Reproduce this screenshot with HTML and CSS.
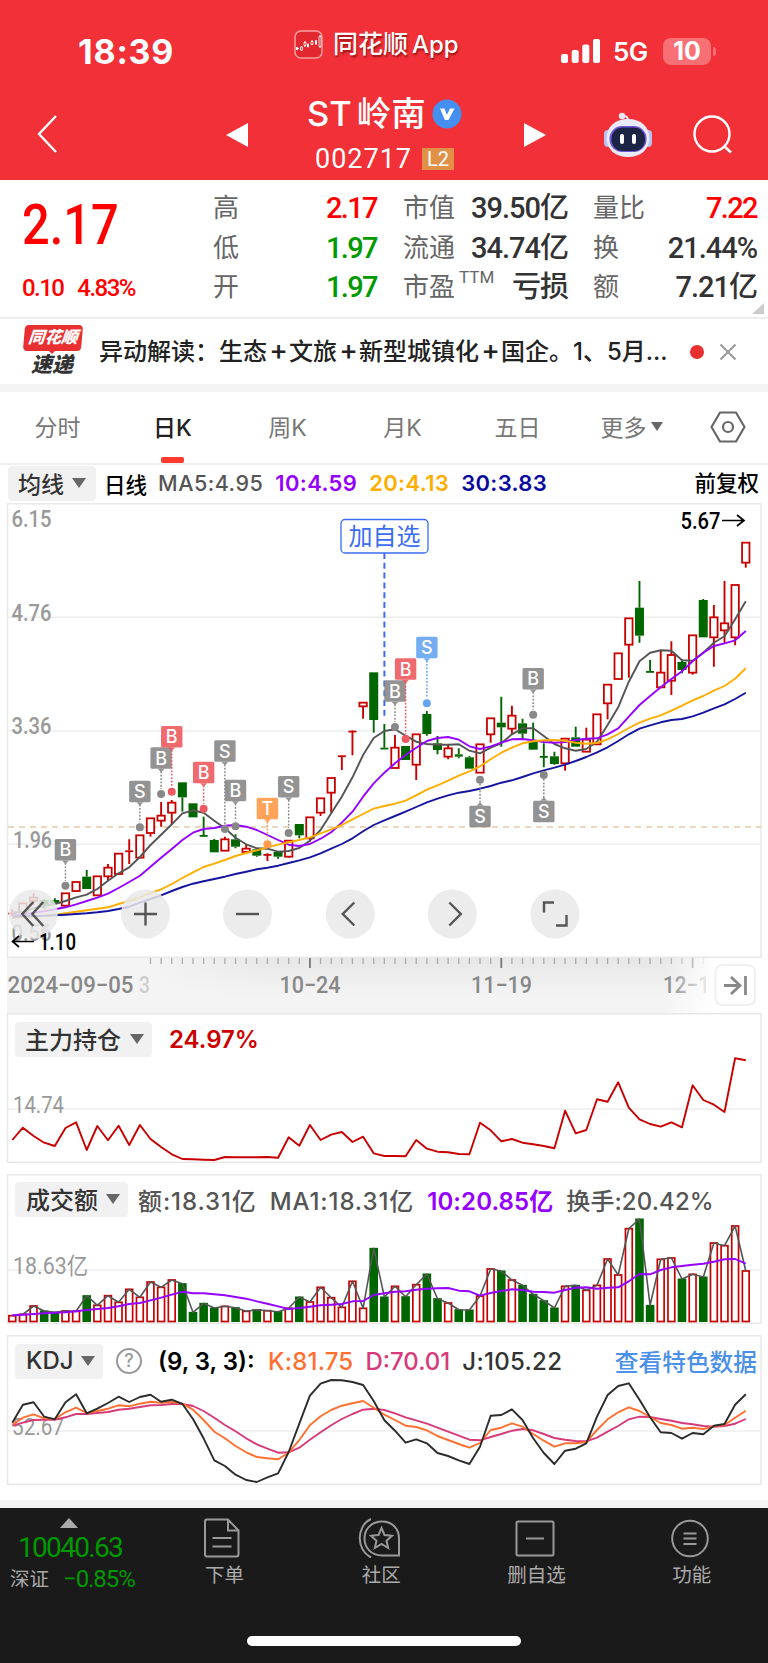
FILE: index.html
```html
<!DOCTYPE html>
<html lang="zh-CN">
<head>
    <meta charset="UTF-8">
    <meta name="viewport" content="width=device-width, initial-scale=1.0">
    <title>ST岭南 002717</title>
    <link rel="stylesheet" href="styles.css">
</head>
<body>
    <header>
        <div class="status-bar">
            <div class="time">18:39</div>
            <div class="app-name">
                <svg width="29" height="29" viewBox="0 0 29 29">
                    <rect x="1" y="1" width="27" height="27" rx="6" fill="#e2282e" stroke="#f9a0a0" stroke-width="1.5"/>
                    <path d="M3 18.500h2M7.500 16v5M11 11v6M14 13.500v4M18 10v5M22 10v4M26 5v13" stroke="#fff" stroke-width="1"/>
                    <path d="M2 17h2v3H2zM13 14h2v3h-2zM21 10.500h2v4h-2z" fill="#fff"/>
                    <path d="M6.500 17h2v3h-2zM10 12.500h2v3h-2zM17 11.500h2v3h-2zM25 6.500h2v10h-2z" fill="#e2282e" stroke="#fff" stroke-width=".8"/>
                </svg>
                <span>同花顺<b>App</b></span>
            </div>
            <div class="phone-state">
                <svg width="39" height="25" viewBox="0 0 39 25" fill="#fff">
                    <rect x="0" y="15" width="7" height="9" rx="2"/>
                    <rect x="10.700" y="11" width="7" height="13" rx="2"/>
                    <rect x="21.300" y="5.500" width="7" height="18.500" rx="2"/>
                    <rect x="32" y="0" width="7" height="24" rx="2"/>
                </svg>
                <span class="net">5G</span>
                <span class="battery">10</span>
                <i class="battery-tip"></i>
            </div>
        </div>
        <nav class="stock-nav">
            <svg class="back" width="22" height="40" viewBox="0 0 22 40"><path d="M20 2L3 20l17 18" fill="none" stroke="#fff" stroke-width="2.400"/></svg>
            <svg class="prev" width="24" height="26" viewBox="0 0 24 26"><path d="M23 1v24L1 13z" fill="#fff"/></svg>
            <div class="stock">
                <h1><span>ST</span>岭南
                    <svg width="30" height="30" viewBox="0 0 30 30"><circle cx="15" cy="15" r="14.500" fill="#448ff0"/><path d="M8 9.500h4.500l2.300 6.500 3.200-6.500h4.500L16.500 21h-3.600z" fill="#fff"/></svg>
                </h1>
                <p><span>002717</span><em>L2</em></p>
            </div>
            <svg class="next" width="24" height="26" viewBox="0 0 24 26"><path d="M1 1v24l22-12z" fill="#fff"/></svg>
            <svg class="robot" width="48" height="46" viewBox="0 0 48 46">
                <path d="M24 9c0-4-1-5-6-5" fill="none" stroke="#e6e8fa" stroke-width="2"/>
                <circle cx="18" cy="4" r="3.200" fill="#e6e8fa"/>
                <rect x="0" y="18" width="8" height="17" rx="4" fill="#b9c0ee"/>
                <rect x="40" y="18" width="8" height="17" rx="4" fill="#b9c0ee"/>
                <path d="M24 7C11 7 2.500 15 2.500 26S11 45 24 45s21.500-8 21.500-19S37 7 24 7z" fill="#e9ebfb"/>
                <rect x="5.500" y="14" width="37" height="26" rx="12.500" fill="#7158d8"/>
                <rect x="7.500" y="15.500" width="33.500" height="23.500" rx="11" fill="#1b2444"/>
                <rect x="16" y="22" width="4" height="10" rx="2" fill="#fff"/>
                <rect x="28" y="22" width="4" height="10" rx="2" fill="#fff"/>
            </svg>
            <svg class="search" width="42" height="42" viewBox="0 0 42 42"><circle cx="20" cy="20" r="17.500" fill="none" stroke="#fff" stroke-width="2.400"/><path d="M32 32l7 6.500" stroke="#fff" stroke-width="2.600"/></svg>
        </nav>
    </header>

    <section class="quote">
        <div class="price">
            <strong>2.17</strong>
            <p><span>0.10</span><span>4.83%</span></p>
        </div>
        <dl class="col high-low">
            <div><dt>高</dt><dd class="red">2.17</dd></div>
            <div><dt>低</dt><dd class="green">1.97</dd></div>
            <div><dt>开</dt><dd class="green">1.97</dd></div>
        </dl>
        <dl class="col value">
            <div><dt>市值</dt><dd>39.50亿</dd></div>
            <div><dt>流通</dt><dd>34.74亿</dd></div>
            <div><dt>市盈<sup>TTM</sup></dt><dd>亏损</dd></div>
        </dl>
        <dl class="col volume">
            <div><dt>量比</dt><dd class="red">7.22</dd></div>
            <div><dt>换</dt><dd>21.44%</dd></div>
            <div><dt>额</dt><dd>7.21亿</dd></div>
        </dl>
        <i class="corner"></i>
    </section>

    <section class="news">
        <div class="news-logo">
            <span>同花顺</span>
            <b>速递</b>
        </div>
        <p>异动解读：生态<i>+</i>文旅<i>+</i>新型城镇化<i>+</i>国企。1、5月...</p>
        <span class="dot"></span>
        <svg width="18" height="18" viewBox="0 0 18 18"><path d="M1.500 1.500l15 15M16.500 1.500l-15 15" stroke="#999" stroke-width="2"/></svg>
    </section>

    <ul class="tabs">
        <li>分时</li>
        <li class="active">日K</li>
        <li>周K</li>
        <li>月K</li>
        <li>五日</li>
        <li>更多<i class="caret"></i></li>
        <li class="setting"><svg width="36" height="32" viewBox="0 0 36 32" fill="none" stroke="#666" stroke-width="2.200"><path d="M10 1.500h16L34.500 16 26 30.500H10L1.500 16z" stroke-linejoin="round"/><circle cx="18" cy="16" r="5"/></svg></li>
    </ul>

    <div class="legend ma">
        <span class="pill">均线<i class="caret"></i></span>
        <b>日线</b>
        <span class="gray">MA5:4.95</span>
        <span class="purple">10:4.59</span>
        <span class="orange">20:4.13</span>
        <span class="navy">30:3.83</span>
        <b class="right">前复权</b>
    </div>
    <svg id="kline" class="kline" width="768" height="455" viewBox="0 3 768 455"></svg>
    <svg id="timeline" class="timeline" width="768" height="55" viewBox="0 0 768 55"></svg>

    <section class="panel">
        <svg id="holding" width="768" height="150" viewBox="0 3 768 150"></svg>
        <div class="legend">
            <span class="pill">主力持仓<i class="caret"></i></span>
            <span class="holding-value">24.97%</span>
        </div>
    </section>
    <section class="panel">
        <svg id="turnover" width="768" height="150" viewBox="0 2 768 150"></svg>
        <div class="legend turnover-legend">
            <span class="pill">成交额<i class="caret"></i></span>
            <span class="gray">额:18.31亿</span>
            <span class="gray">MA1:18.31亿</span>
            <span class="purple">10:20.85亿</span>
            <span class="gray rate">换手:20.42%</span>
        </div>
    </section>
    <section class="panel">
        <svg id="kdj" width="768" height="150" viewBox="0 5 768 150"></svg>
        <div class="legend kdj-legend">
            <span class="pill">KDJ<i class="caret"></i></span>
            <span class="help">?</span>
            <span class="black">(9, 3, 3):</span>
            <span class="k">K:81.75</span>
            <span class="d">D:70.01</span>
            <span class="j">J:105.22</span>
            <a class="right">查看特色数据</a>
        </div>
    </section>

    <footer>
        <div class="index">
            <i class="up"></i>
            <strong>10040.63</strong>
            <p>深证 <span>−0.85%</span></p>
        </div>
        <div class="item">
            <svg width="38" height="40" viewBox="0 0 38 40"><path d="M2 3.500Q2 1.500 4 1.500h21l10.500 11V36q0 2.500-2 2.500H4q-2 0-2-2zM25 1.500v11h10.500M9.500 20h19M9.500 28.500h19"/></svg>
            下单
        </div>
        <div class="item">
            <svg width="44" height="40" viewBox="0 0 44 40"><path d="M42 37.500H25C14 37.500 7.500 29.500 7.500 20.500S14 3.500 25 3.500s17 8 17 17zM14 1C-1 8-1 32 14 39.500"/><path d="M24.500 10l3 7 7.500.700-5.500 5.100 1.700 7.200-6.700-4-6.700 4 1.700-7.200-5.500-5.100 7.500-.700z"/></svg>
            社区
        </div>
        <div class="item">
            <svg width="40" height="40" viewBox="0 0 40 40"><rect x="1.500" y="3.500" width="37" height="34" rx="1.500"/><path d="M11 20.500h18"/></svg>
            删自选
        </div>
        <div class="item">
            <svg width="40" height="40" viewBox="0 0 40 40"><circle cx="20" cy="20.500" r="17.800"/><path d="M13.500 15.500h13M13.500 20.500h13M13.500 26h13"/></svg>
            功能
        </div>
        <div class="home-bar"></div>
    </footer>

    <script src="chart.js"></script>
</body>
</html>
```
FILE: styles.css
```css
* {
    box-sizing: border-box;
}

body {
    margin: 0;
    width: 768px;
    background-color: #fff;
    font-family: Inter, 'Noto Sans CJK SC', sans-serif;
    color: #333;
}

h1, p, ul, dl, dd {
    margin: 0;
    padding: 0;
}

i, em {
    font-style: normal;
}

svg {
    display: block;
    flex-shrink: 0;
}

/* Header */
header {
    height: 180px;
    background-color: #f23037;
    color: #fff;
}

.status-bar {
    height: 92px;
    display: grid;
    grid-template-columns: 294px 267px 1fr;
}

.time {
    padding: 31px 0 0 78px;
    font-size: 34px;
    line-height: 41px;
    font-weight: 700;
    letter-spacing: 0.8px;
}

.app-name {
    display: flex;
    align-items: center;
    gap: 10px;
    height: 29px;
    margin-top: 30px;
    font-size: 25px;
    line-height: 29px;
    font-weight: 500;
    white-space: nowrap;
    text-shadow: 1px 2px 2px rgba(90, 0, 0, 0.6);
}

.app-name b {
    margin-left: 4px;
    font-size: 24px;
    font-weight: 500;
}

.phone-state {
    display: flex;
    align-items: center;
    height: 26px;
    margin-top: 38px;
}

.net {
    width: 63px;
    padding-left: 13px;
    font-size: 26px;
    font-weight: 600;
    letter-spacing: -0.5px;
    white-space: nowrap;
}

.battery {
    width: 48px;
    height: 27px;
    border-radius: 8px;
    background-color: #f77076;
    text-align: center;
    font-size: 25px;
    line-height: 27px;
    font-weight: 700;
}

.battery-tip {
    width: 3px;
    height: 9px;
    margin-left: 2px;
    border-radius: 0 3px 3px 0;
    background-color: #f77076;
}

.stock-nav {
    height: 88px;
    display: flex;
    align-items: flex-start;
}

.back {
    margin: 22px 0 0 36px;
}

.prev {
    margin: 30px 0 0 167px;
}

.stock {
    width: 274px;
    padding-left: 58px;
}

.stock h1 {
    display: flex;
    align-items: center;
    height: 44px;
    color: #fff;
    font-size: 34.5px;
    line-height: 40px;
    font-weight: 500;
    white-space: nowrap;
}

.stock h1 span {
    margin-right: 5px;
}

.stock h1 svg {
    margin-left: 6px;
}

.stock p {
    display: flex;
    align-items: center;
    height: 46px;
    padding-left: 8px;
    font-family: Roboto, sans-serif;
    font-size: 27px;
}

.stock p span {
    width: 107px;
    letter-spacing: 1px;
}

.stock em {
    width: 32px;
    height: 22px;
    background-color: #e09147;
    text-align: center;
    font-size: 20px;
    line-height: 22px;
}

.next {
    margin: 30px 0 0 0;
}

.robot {
    margin: 20px 0 0 57px;
}

.search {
    margin: 22px 0 0 40px;
}

/* Quote */
.quote {
    position: relative;
    display: flex;
    height: 139px;
    border-bottom: 2px solid #eee;
    font-family: Roboto, 'Noto Sans CJK SC', sans-serif;
}

.price {
    width: 213px;
    padding: 12px 0 0 22px;
    color: #f00;
}

.price strong {
    display: block;
    font-size: 56px;
    line-height: 66px;
    font-weight: 500;
    transform: scaleX(0.87);
    transform-origin: left;
}

.price p {
    display: flex;
    gap: 14px;
    margin-top: 15px;
    font-size: 24px;
    line-height: 30px;
    font-weight: 500;
    letter-spacing: -0.065em;
}

.col {
    padding-top: 9px;
}

.col > div {
    display: flex;
    justify-content: space-between;
    height: 39.5px;
    line-height: 39px;
    white-space: nowrap;
}

.high-low {
    width: 164px;
    margin-right: 26px;
}

.value {
    width: 165px;
    margin-right: 25px;
}

.volume {
    width: 164px;
}

.col dt {
    font-size: 26px;
    color: #666;
}

.col dd {
    font-size: 29px;
    font-weight: 500;
    letter-spacing: -0.055em;
    color: #333;
}

.value dd, .volume dd {
    letter-spacing: -0.035em;
}

.col sup {
    display: inline-block;
    margin-left: 4px;
    font-size: 17px;
    line-height: 0;
    vertical-align: 13px;
}

.col .red {
    color: #f00;
}

.col .green {
    color: #090;
}

.volume .red {
    letter-spacing: -0.055em;
}

.corner {
    position: absolute;
    right: 4px;
    bottom: 3px;
    border-left: 12px solid transparent;
    border-bottom: 11px solid #ccc;
}

/* News line */
.news {
    display: flex;
    align-items: center;
    height: 73px;
    padding: 0 31px 0 24px;
    border-bottom: 8px solid #f4f4f4;
}

.news-logo {
    position: relative;
    width: 75px;
    flex-shrink: 0;
    font-style: italic;
}

.news-logo span {
    display: block;
    width: 58px;
    height: 26px;
    border-radius: 4px;
    background-color: #e93030;
    color: #fff;
    text-align: center;
    font-size: 16.5px;
    line-height: 25px;
    font-weight: 900;
    transform: skewX(-5deg);
}

.news-logo::after {
    content: '';
    position: absolute;
    left: 24px;
    top: 25px;
    border: 4px solid transparent;
    border-top-color: #e93030;
}

.news-logo b {
    display: block;
    padding-left: 7px;
    font-size: 21px;
    line-height: 27px;
    font-weight: 900;
}

.news p {
    width: 593px;
    font-size: 24px;
    font-weight: 500;
    line-height: 32px;
    white-space: nowrap;
    color: #222;
}

.news p i {
    display: inline-block;
    width: 22px;
    text-align: center;
    font-size: 28px;
    line-height: 20px;
    text-indent: 1px;
}

.dot {
    width: 14px;
    height: 14px;
    margin-right: 15px;
    flex-shrink: 0;
    border-radius: 50%;
    background-color: #e93030;
}

/* Tabs */
.tabs {
    display: flex;
    height: 73px;
    list-style: none;
    border-bottom: 2px solid #eee;
}

.tabs li {
    position: relative;
    display: flex;
    justify-content: center;
    align-items: center;
    width: 115px;
    padding-bottom: 3px;
    font-size: 23px;
    color: #777;
}

.tabs .setting {
    width: 76px;
    padding-bottom: 1px;
}

.tabs .caret {
    border-width: 9px 6.5px 0;
    margin: 0 2px 0 4px;
}

.tabs .active {
    color: #222;
    font-weight: 500;
}

.active::after {
    content: '';
    position: absolute;
    bottom: 0;
    width: 23px;
    height: 6px;
    border-radius: 2px;
    background-color: #ff3b30;
}

.caret {
    border: 7px solid transparent;
    border-width: 10px 7px 0;
    border-top-color: #666;
}

/* Indicator text rows */
.legend {
    display: flex;
    align-items: center;
    height: 36px;
    font-size: 24px;
    font-weight: 500;
    white-space: nowrap;
}

.pill {
    display: flex;
    justify-content: space-between;
    align-items: center;
    width: 137px;
    height: 35px;
    padding: 0 8px 1px 10px;
    border-radius: 4px;
    background-color: #f1f1f1;
    font-size: 24px;
}

.ma {
    height: 38px;
    padding: 0 9px 2px 8px;
    font-size: 21.5px;
    color: #000;
}

.ma .pill {
    width: 88px;
    font-size: 23px;
    color: #333;
    margin-right: 8px;
}

.ma .caret {
    margin-right: 2px;
}

.ma b {
    font-weight: 500;
}

.ma .right {
    margin-top: -4px;
}

.ma b + span {
    margin-left: 11px;
    letter-spacing: 0.5px;
}

.ma span + span {
    margin-left: 12px;
    font-size: 22px;
    font-weight: 600;
    letter-spacing: 0.35px;
}

.right {
    margin-left: auto;
}

.gray { color: #555; }
.black { color: #000; }
.purple { color: #9500ff; }
.orange { color: #ffae00; }
.navy { color: #0a0a9c; }
.k { color: #ff6f30; }
.d { color: #d63a7a; }
.j { color: #333; }

.kline text, .timeline text, .panel text {
    font-family: Roboto, 'Noto Sans CJK SC', sans-serif;
    font-size: 23px;
    font-weight: 500;
    fill: #999;
}

.panel text {
    font-weight: 400;
}

.kline .mark {
    font-family: Inter, sans-serif;
    font-size: 18px;
    fill: #fff;
    text-anchor: middle;
}

.kline .add-text {
    font-family: 'Noto Sans CJK SC', sans-serif;
    font-size: 24px;
    font-weight: 400;
    fill: #3a6cf4;
    text-anchor: middle;
}

.kline .extreme {
    fill: #000;
}

.timeline text {
    font-size: 24px;
    fill: #888;
}

.panel {
    display: grid;
    margin-bottom: 11px;
}

.panel > * {
    grid-area: 1 / 1;
}

.panel .legend {
    margin: 8px 11px 0 15px;
}

.holding-value {
    margin-left: 17px;
    font-weight: 600;
    color: #c00;
}

.panel .turnover-legend {
    gap: 13px;
    margin-top: 7px;
}

.turnover-legend .gray {
    letter-spacing: 0.9px;
}

.turnover-legend .purple {
    letter-spacing: 0.1px;
    font-weight: 600;
}

.turnover-legend .rate {
    letter-spacing: 0.1px;
}

.turnover-legend .pill {
    width: 113px;
    margin-right: -3px;
    padding-left: 11px;
}

.kdj-legend {
    gap: 12px;
}

.kdj-legend .pill {
    width: 88px;
    padding-left: 11px;
}

.kdj-legend .black {
    width: 98px;
    font-weight: 600;
}

.kdj-legend .k {
    letter-spacing: 0.2px;
}

.kdj-legend .j {
    letter-spacing: 0.3px;
}

.help {
    width: 26px;
    height: 26px;
    border: 2px solid #999;
    border-radius: 50%;
    text-align: center;
    font-size: 18px;
    line-height: 22px;
    color: #999;
    margin: 0 4px 0 1px;
}

.kdj-legend a {
    color: #4a90e8;
    font-size: 23.7px;
}

/* Bottom bar */
footer {
    position: relative;
    display: flex;
    height: 163px;
    margin-top: 15px;
    border-top: 8px solid #f4f4f4;
    background-color: #1a1a1a;
    color: #aaa;
}

.index {
    width: 147px;
    padding-top: 10px;
    font-family: Roboto, 'Noto Sans CJK SC', sans-serif;
}

.up {
    display: block;
    width: 0;
    margin-left: 60px;
    border: 9px solid transparent;
    border-width: 0 9px 10px;
    border-bottom-color: #aaa;
}

.index strong {
    display: block;
    padding-left: 18px;
    font-size: 28px;
    line-height: 39px;
    font-weight: 400;
    letter-spacing: -0.06em;
    color: #090;
}

.index p {
    display: flex;
    gap: 14px;
    padding-left: 10px;
    font-size: 19.5px;
    line-height: 25px;
    white-space: nowrap;
}

.index span {
    font-size: 24px;
    letter-spacing: -0.045em;
    color: #090;
}

.item {
    width: 155.5px;
    padding-top: 10px;
    display: flex;
    flex-direction: column;
    align-items: center;
    gap: 4px;
    font-size: 19.5px;
    line-height: 27px;
}

.item + .item {
    padding-left: 3px;
}

.item svg {
    fill: none;
    stroke: #999;
    stroke-width: 2;
    margin-right: 4px;
}

.home-bar {
    position: absolute;
    left: 247px;
    bottom: 17px;
    width: 274px;
    height: 10px;
    border-radius: 5px;
    background-color: #fff;
}
```
FILE: chart.js
```js
const RED = '#c90000', GREEN = '#006600', GRAY = '#555';
const X = i => 12.3 + i * 10.63;
const Y = v => v / 3;

// high, body top, body bottom, low
const candles = [
    [1228,1238,1242,1247],[1210,1210,1236,1236],[1180,1193,1203,1215],[1196,1200,1215,1228],[1195,1200,1211,1215],
    [1180,1180,1217,1222],[1146,1146,1173,1176],[1110,1130,1167,1167],[1129,1129,1186,1186],[1092,1103,1129,1140],
    [1061,1061,1122,1125],[1018,1051,1053,1092],[1006,1006,1073,1073],[955,955,999,1010],[906,947,962,980],
    [900,908,938,973],[847,847,892,935],[910,910,952,952],[950,1005,1007,1007],[1017,1020,1057,1057],
    [1010,1018,1052,1052],[1003,1018,1040,1045],[1033,1046,1056,1056],[1044,1048,1067,1070],[1060,1062,1064,1083],
    [1054,1056,1070,1076],[1022,1022,1070,1073],[972,972,1006,1015],[952,952,1015,1025],[895,895,938,948],
    [834,834,878,938],[765,766,768,810],[691,692,694,766],[608,608,619,656],[517,517,660,698],
    [672,743,745,745],[705,743,804,804],[738,738,780,780],[703,703,794,840],[633,642,702,707],
    [708,730,750,763],[735,745,770,778],[745,763,770,775],[768,772,806,806],[733,733,818,818],
    [655,655,703,728],[590,668,682,740],[617,647,686,702],[656,670,701,716],[668,722,749,749],
    [730,768,771,802],[755,769,792,794],[716,716,790,812],[680,712,740,740],[683,719,755,755],
    [643,643,733,733],[554,554,610,658],[460,460,537,537],[355,355,434,533],[243,323,407,428],
    [480,513,515,515],[450,518,562,565],[424,465,542,585],[478,486,510,520],[406,406,518,524],
    [297,300,412,412],[315,352,412,500],[243,370,391,428],[255,255,412,436],[128,128,188,203]
];
const falling = [3,4,7,16,17,18,19,21,23,25,27,34,35,37,39,40,42,43,46,48,49,50,51,53,59,60,63,65];

const ma5 = [1238,1235,1225,1218,1212,1203,1192,1184,1167,1142,1120,1102,1071,1035,1004,973,940,931,938,962,985,1013,1033,1045,1046,1055,1053,1044,1022,990,940,890,832,765,714,693,688,707,725,732,734,734,733,752,760,743,730,703,685,685,708,732,745,752,747,725,675,622,545,484,458,451,452,481,482,458,428,409,358,304];
const ma10 = [1248,1243,1238,1234,1228,1222,1213,1203,1193,1181,1164,1146,1127,1100,1073,1047,1020,998,987,984,977,975,980,990,1005,1020,1034,1038,1032,1016,997,968,935,890,850,818,790,765,743,723,714,711,719,739,747,739,728,718,717,721,726,728,726,720,716,715,703,685,650,615,588,562,537,514,484,458,438,430,421,393];
const ma20 = [1254,1252,1250,1248,1244,1240,1235,1231,1226,1222,1212,1203,1192,1179,1168,1152,1134,1117,1101,1091,1080,1068,1059,1051,1042,1034,1027,1020,1012,1000,988,975,958,942,926,918,911,902,886,869,856,842,827,814,799,778,758,743,730,724,721,720,722,728,731,729,718,702,684,668,656,646,632,617,601,588,572,558,536,505];
const ma30 = [1250,1249,1248,1247,1246,1244,1242,1240,1237,1233,1227,1220,1208,1197,1186,1173,1161,1151,1144,1137,1130,1122,1115,1108,1103,1097,1089,1081,1072,1060,1046,1032,1015,994,975,961,948,935,921,907,896,886,878,873,866,858,848,841,831,820,811,803,794,783,771,757,742,723,703,686,676,667,660,657,649,638,625,613,597,578];

const holding = [390,353,378,398,408,354,337,420,348,391,347,405,345,387,411,433,447,448,449,450,441,442,442,442,441,443,382,407,345,390,374,366,396,380,430,438,438,439,390,416,425,427,432,433,338,361,394,387,398,403,408,415,302,370,360,268,275,217,293,328,342,350,337,352,226,270,284,306,145,151];

const turnover = [431,427,402,417,421,417,418,371,400,371,391,352,376,330,346,324,335,421,394,408,403,407,418,413,416,419,409,375,390,346,377,406,328,409,229,375,343,374,338,306,380,393,413,414,372,291,297,324,340,367,386,408,343,340,355,340,261,309,170,141,400,262,258,321,307,315,213,221,162,297];
const turnoverMa = [430,428,426,424,422,421,418,414,411,408,403,396,393,385,377,368,359,364,364,367,370,375,380,388,395,403,411,408,404,400,398,396,388,387,369,364,359,358,353,350,349,348,356,358,371,363,357,352,354,359,360,362,354,347,346,350,347,346,328,306,307,294,286,282,278,275,269,262,261,275];

const lineJ = [278,224,217,260,268,217,193,250,236,219,200,216,201,194,215,209,222,267,325,391,408,434,450,456,442,430,366,281,197,161,150,151,156,165,213,271,302,338,328,340,369,378,391,402,350,257,255,238,270,325,369,402,362,356,340,260,195,168,160,209,262,307,309,326,309,313,287,282,224,193];
const lineK = [284,263,253,265,267,247,233,249,243,236,226,229,221,215,218,216,221,239,270,305,325,348,367,381,385,388,368,330,286,259,240,227,220,213,233,254,270,287,291,301,318,330,342,353,339,300,293,280,290,312,332,350,340,340,336,300,268,247,232,243,261,279,285,296,293,297,289,285,263,242];
const lineD = [287,278,270,269,269,262,252,252,249,246,239,236,231,226,225,222,222,228,243,263,285,304,325,343,356,368,367,353,329,307,286,267,252,239,236,240,250,262,271,281,293,305,317,329,331,321,312,302,297,301,312,324,329,333,334,323,305,288,268,260,261,267,272,279,283,288,290,288,281,267];

// index, letter, colour, box top, dot
const marks = [
    [5,'B','#888',1017,1157],[12,'S','#888',842,982],[14,'B','#888',742,882],[15,'B','#ee5a5f',678,875],
    [18,'B','#ee5a5f',785,926],[20,'S','#888',721,987],[21,'B','#888',839,979],[24,'T','#ff9a4a',893,1033],
    [26,'S','#888',828,999],[36,'B','#888',541,681],[37,'B','#ee5a5f',475,717],[39,'S','#66a5f0',410,610],
    [44,'S','#888',917,839],[49,'B','#888',504,644],[50,'S','#888',902,825]
];

function line(data, color, width = 1.9) {
    const points = data.map((v, i) => `${X(i).toFixed(1)},${Y(v).toFixed(1)}`).join(' ');
    return `<polyline points="${points}" fill="none" stroke="${color}" stroke-width="${width}" stroke-linejoin="round"/>`;
}

function hLine(y, color = '#eee') {
    return `<path d="M8 ${y}H761" stroke="${color}" stroke-width="1.5"/>`;
}

function frame(top, height) {
    return `<rect x="7.500" y="${top + 0.75}" width="753.500" height="${height - 1.5}" fill="none" stroke="#e8e8e8" stroke-width="1.500"/>`;
}

function label(x, y, text, length, cls = '') {
    return `<text x="${x}" y="${y}" textLength="${length}" lengthAdjust="spacingAndGlyphs" class="${cls}">${text}</text>`;
}

function candle(c, i) {
    const down = falling.includes(i);
    const color = down ? GREEN : RED;
    const [high, top, bottom, low] = c.map(Y);
    const x = X(i);
    const h = bottom - top;
    let out = `<path d="M${x} ${high}V${top}M${x} ${bottom}V${low}" stroke="${color}" stroke-width="1.900"/>`;
    if (down || h < 2.5) {
        const t = Math.max(h, 1.8);
        const w = h < 2.5 ? 8 : 9;
        out += `<rect x="${x - w / 2}" y="${top}" width="${w}" height="${t}" fill="${color}"/>`;
    } else {
        out += `<rect x="${x - 3.7}" y="${top}" width="7.400" height="${h}" fill="#fff" stroke="${color}" stroke-width="1.800"/>`;
    }
    return out;
}

function mark([i, letter, color, boxTop, dot]) {
    const x = X(i), top = Y(boxTop), d = Y(dot);
    const below = dot < boxTop;
    const tip = below
        ? `M${x - 3.5} ${top}L${x} ${top - 3.5}L${x + 3.5} ${top}z`
        : `M${x - 3.5} ${top + 21.5}L${x} ${top + 25}L${x + 3.5} ${top + 21.5}z`;
    const stem = below ? `M${x} ${d + 4}V${top - 3}` : `M${x} ${top + 24}V${d - 5}`;
    return `<path d="${stem}" stroke="${color}" stroke-width="1.500" stroke-dasharray="1.8 1.600"/>
        <circle cx="${x}" cy="${d}" r="4" fill="${color}"/>
        <g opacity=".9"><rect x="${x - 10.7}" y="${top}" width="21.400" height="21.500" rx="1.500" fill="${color}"/><path d="${tip}" fill="${color}"/></g>
        <text class="mark" x="${x}" y="${top + 17.2}">${letter}</text>`;
}

function tool(x, path) {
    return `<circle cx="${x}" cy="414" r="24.500" fill="#e9e9e9" fill-opacity=".85"/>
        <path transform="translate(${x} 414)" d="${path}" fill="none" stroke="#555" stroke-width="2.400"/>`;
}

function drawKline() {
    let out = frame(3, 455) + hLine(117.3) + hLine(231) + hLine(344.3);
    out += label(11.5, 27, '6.15', 40) + label(11.5, 120.5, '4.76', 40) + label(11.5, 234, '3.36', 40) + label(13, 348, '1.96', 39) + label(11.5, 441, '0.56', 40);
    out += '<path d="M8 327H761" stroke="#e6c9a6" stroke-width="1.500" stroke-dasharray="6 5"/>';
    out += candles.map(candle).join('');
    out += line(ma5, GRAY) + line(ma10, '#9500ff') + line(ma20, '#ffae00') + line(ma30, '#1414a0');
    out += '<path d="M384.400 53V217" stroke="#3a6cf4" stroke-width="2" stroke-dasharray="6 3.800"/>';
    out += '<rect x="341" y="19.500" width="87" height="33.500" rx="4" fill="#fff" stroke="#3a6cf4" stroke-width="1.300"/><text class="add-text" x="384.500" y="45">加自选</text>';
    out += marks.map(mark).join('');
    out += tool(33.3, 'M0 -12L-11 0L0 12M10 -12L-1 0L10 12');
    out += tool(145.5, 'M-11.500 0H11.500M0 -11.500V11.500');
    out += tool(247.5, 'M-11.500 0H11.500');
    out += tool(350.3, 'M4 -11.500L-7.500 0L4 11.500');
    out += tool(452.3, 'M-3 -11.500L8.500 0L-3 11.500');
    out += tool(555, 'M-11 -1.500V-11.500H-1M1 11.500H11.500V1');
    out += label(680.5, 28.5, '5.67', 40, 'extreme') + '<path d="M722 20.500H743M737 15l7 5.500-7 5.500" fill="none" stroke="#000" stroke-width="1.700"/>';
    out += '<path d="M34 441.500H13M19 436l-6.500 5.500 6.500 5.500" fill="none" stroke="#000" stroke-width="1.700"/>' + label(39, 450, '1.10', 37, 'extreme');
    document.getElementById('kline').innerHTML = out;
}

function drawTimeline() {
    let out = `<defs>
        <linearGradient id="shade" x1="0" x2="0" y1="0" y2="1"><stop offset="0" stop-color="#e7e7e7"/><stop offset=".7" stop-color="#f4f4f4"/></linearGradient>
        <linearGradient id="left" x1="0" x2="1"><stop offset=".55" stop-color="#f4f4f4"/><stop offset="1" stop-color="#f4f4f4" stop-opacity="0"/></linearGradient>
        <linearGradient id="right" x1="0" x2="1"><stop offset="0" stop-color="#fff" stop-opacity="0"/><stop offset="1" stop-color="#fff"/></linearGradient>
        </defs><rect x="7" width="754" height="55" fill="url(#shade)"/>`;
    out += '<rect x="7" width="260" height="55" fill="url(#left)"/>';
    for (let i = 13; i < 66; i++) {
        const major = i === 28 || i === 46 || i === 64;
        out += `<path d="M${X(i)} 0V${major ? 10 : 6}" stroke="${major ? '#777' : '#aaa'}" stroke-width="${major ? 1.8 : 1.3}"/>`;
    }
    out += '<g opacity=".35">' + label(139, 35, '3', 11) + '</g>' + label(279.5, 35, '10−24', 61) + label(471, 35, '11−19', 61) + label(663, 35, '12−1', 47);
    out += '<rect x="665" width="51" height="55" fill="url(#right)"/><rect x="714" width="54" height="55" fill="#fff"/>';
    out += label(7.5, 35, '2024−09−05', 126);
    out += `<rect x="715.500" y="7" width="39.500" height="40" rx="7" fill="#fff" stroke="#f0f0f0" stroke-width="2"/>
        <path d="M724 27.500H740M731 19l9 8.500-9 8.500M745.500 18v19" fill="none" stroke="#888" stroke-width="2.800"/>`;
    document.getElementById('timeline').innerHTML = out;
}

function drawHolding() {
    document.getElementById('holding').innerHTML =
        frame(3, 150) + hLine(99) + label(13, 103, '14.74', 51) + line(holding, '#c80000');
}

function drawTurnover() {
    let out = frame(2, 150) + hLine(98) + label(13, 102, '18.63亿', 75);
    turnover.forEach((v, i) => {
        const top = Y(v), h = 149.5 - top;
        out += falling.includes(i)
            ? `<rect x="${X(i) - 4.3}" y="${top - 0.5}" width="8.600" height="${h + 1}" fill="${GREEN}"/>`
            : `<rect x="${X(i) - 3.4}" y="${top}" width="6.800" height="${h}" fill="#fff" stroke="${RED}" stroke-width="1.700"/>`;
    });
    out += line(turnover, GRAY, 1.6) + line(turnoverMa, '#9500ff');
    document.getElementById('turnover').innerHTML = out;
}

function drawKdj() {
    document.getElementById('kdj').innerHTML =
        frame(5, 150) + hLine(101) + label(12, 105, '52.67', 52) +
        line(lineD, '#d63a7a') + line(lineK, '#ff6f30') + line(lineJ, '#2b2b2b');
}

drawKline();
drawTimeline();
drawHolding();
drawTurnover();
drawKdj();
```
